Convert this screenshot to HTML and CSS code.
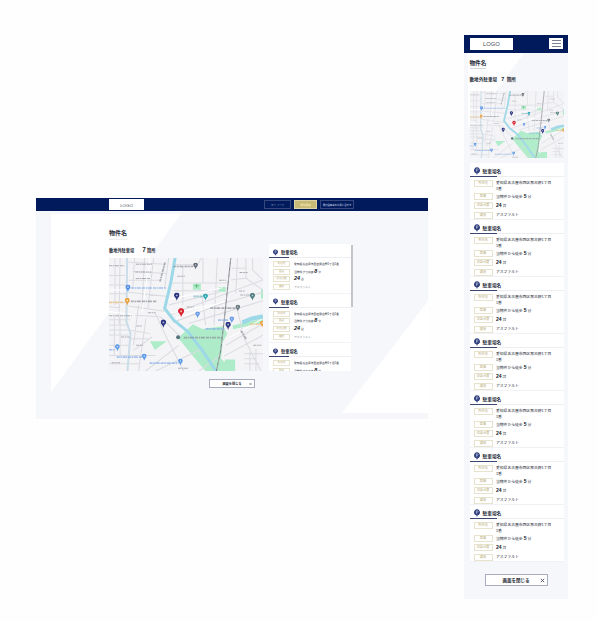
FILE: index.html
```
<!DOCTYPE html>
<html lang="ja">
<head>
<meta charset="utf-8">
<title>物件名</title>
<link rel="stylesheet" href="styles.css">
</head>
<body>
<svg class="defs" width="0" height="0">
  <symbol id="marker" viewBox="0 0 12 18"><path d="M6 18Q5 13 2 10A6 6 0 1 1 10 10Q7 13 6 18Z"/><circle cx="6" cy="6" r="2.2" fill="#fff" opacity=".6"/></symbol>
  <symbol id="pin" viewBox="0 0 12 16"><path fill="#34437f" d="M6 16 4.5 12.5A6 6 0 1 1 7.500 12.500Z"/><path d="M5 9.500V3.500h1.500a1.500 1.500 0 0 1 0 3.200H5" fill="none" stroke="#c5cae4" stroke-width="1.200"/></symbol>
  <symbol id="map" viewBox="12 9 459 338" preserveAspectRatio="xMidYMid slice">
    <rect width="490" height="360" fill="#f4f4f6"/>
    <g fill="#aeecc9">
      <path d="M218 247 262 207 290 221 350 213 365 235 351 260 346 310 385 347H300L262 302Z"/>
      <path d="M134 258H184L149 284ZM262 86H286V104H262ZM339 96H360V110H339ZM465 103H471V130H465ZM380 211 471 190V202L382 222ZM358 312H388V347H350Z"/>
    </g>
    <g fill="none" stroke="#dadbe1" stroke-width="3">
      <path d="M12 62H60M12 90H62M12 116H62M12 142H65M12 194H75M12 209H72M12 224H72M12 239H70M12 270H70M12 300H150M12 325H105M30 9V150M45 9 42 205M12 155 45 158M28 185V300M45 188V300M82 50 184 56M70 22 180 28M70 76H165M70 112 190 124M88 9 83 100M118 9 110 165M145 9 128 160M70 153 178 168M100 150 85 270M122 190 100 347M90 180 165 185 225 245M75 225 135 235M75 250H128M148 170 180 240 235 347M85 285 140 245M120 347 220 270M150 347 290 280M190 9 178 100M203 30H275L288 9M292 9V85M232 35V150M202 84H365M205 107H340M190 150 340 112M190 180 471 75M203 202 350 145 471 112M250 205 471 137M290 125 300 210M335 9 325 210M395 9 390 115M420 9V70L471 105M440 9V45L471 75M375 75 420 70M378 40H420M395 165 415 250 465 347M360 270 471 205M355 302 471 240M415 295H471M415 310H450M415 325H460M432 290V347M450 280V347M280 347 345 300"/>
    </g>
    <g fill="none" stroke="#fff" stroke-width="3"><path d="M12 105H62M12 170 80 177M185 135 350 98M210 190 360 138M365 250 471 190M135 9 110 170M190 175 340 145"/></g>
    <g fill="none" stroke="#cbdde8" stroke-width="6"><path d="M66 9 64 200 76 235 67 347"/></g>
    <g fill="none" stroke="#9dd8e8" stroke-width="9"><path d="M209 9 196 84 178 160 205 195 248 230 290 285 330 345"/><path d="M409 202 438 190 471 184" stroke-width="13"/></g>
    <path d="M375 9 357 180 345 285 332 347" fill="none" stroke="#777b83" stroke-width="3"/>
    <path d="M375 9 357 180 345 285 332 347" fill="none" stroke="#d4d7db" stroke-width="1.500" stroke-dasharray="12 7"/>
    <g fill="none" stroke-width="5" stroke-dasharray="9 2 5 2 12 3" opacity=".68">
      <path stroke="#8b8f97" stroke-width="3" d="M12 33H58M92 28H140M90 51H138M92 71H135M12 182H80M128 173H150M94 212H112M48 245H73M93 270H114M20 322H45M218 338H247M216 64H238M244 156H265M340 76H361M401 53H425M403 120H432M400 108H416M442 270H466"/>
      <path stroke="#8b8f97" d="M204 35H263M77 139H155M314 159H390M405 226 422 253M179 23 164 80M235 247H351"/>
      <path stroke="#83aceb" d="M77 99H181M35 305H112M133 323H219M12 283H28M300 221H356M337 195H369"/>
      <path stroke="#70bac1" d="M264 124H291"/><path stroke="#efbd78" d="M12 142H55M432 207H461"/>
    </g>
    <g>
      <use href="#marker" x="61" y="89" width="15" height="22" fill="#5390e7"/>
      <use href="#marker" x="59" y="129" width="15" height="22" fill="#eaa13d"/>
      <use href="#marker" x="263" y="24" width="14" height="20" fill="#606a75"/>
      <use href="#marker" x="292" y="116" width="15" height="21" fill="#2aa6b1"/>
      <use href="#marker" x="206" y="113" width="16" height="24" fill="#29337f"/>
      <use href="#marker" x="166" y="193" width="16" height="25" fill="#29337f"/>
      <use href="#marker" x="359" y="200" width="16" height="24" fill="#29337f"/>
      <use href="#marker" x="218" y="159" width="18" height="28" fill="#d9232c"/>
      <use href="#marker" x="269" y="169" width="14" height="20" fill="#669ae8"/>
      <use href="#marker" x="371" y="184" width="14" height="20" fill="#669ae8"/>
      <use href="#marker" x="432" y="114" width="15" height="22" fill="#4d7b7c"/>
      <use href="#marker" x="389" y="149" width="14" height="20" fill="#68767d"/>
      <use href="#marker" x="30" y="267" width="14" height="21" fill="#5a98e8"/>
      <use href="#marker" x="110" y="295" width="14" height="21" fill="#5a98e8"/>
      <use href="#marker" x="218" y="310" width="14" height="20" fill="#5a98e8"/>
      <use href="#marker" x="461" y="197" width="15" height="20" fill="#eaa13d"/>
      <circle cx="218" cy="246" r="6" fill="#58727a"/><path d="M266 92H280M273 87V99" stroke="#6dbb86" stroke-width="3"/>
    </g>
  </symbol>
</svg>
<main class="showcase">
  <section class="screen wide">
    <header class="bar"><div class="logo">LOGO</div><nav><a>マイページ</a><a class="gold">物件検索</a><a class="tel">周辺駐車場のお問い合わせ</a></nav></header>
    <div class="content">
      <svg class="backdrop" viewBox="0 0 392 208" preserveAspectRatio="none"><path fill="#fff" d="M15 3H145L15 181ZM392 90V202H306Z"/></svg>
      <h1><span>物件名</span></h1>
      <p class="count">敷地外駐車場 <b>7</b> 箇所</p>
      <div class="columns">
        <svg class="map"><use href="#map"/></svg>
        <div class="list">
          <article><h2><svg><use href="#pin"/></svg>駐車場名</h2><dl><dt>所在地</dt><dd>愛知県名古屋市西区那古野1丁目1番</dd><dt>距離</dt><dd>当物件から徒歩 <b>8</b> 分</dd><dt>収容台数</dt><dd><b>24</b> 台</dd><dt>舗装</dt><dd class="soft">アスファルト</dd></dl></article>
          <article><h2><svg><use href="#pin"/></svg>駐車場名</h2><dl><dt>所在地</dt><dd>愛知県名古屋市西区那古野1丁目1番</dd><dt>距離</dt><dd>当物件から徒歩 <b>8</b> 分</dd><dt>収容台数</dt><dd><b>24</b> 台</dd><dt>舗装</dt><dd class="soft">アスファルト</dd></dl></article>
          <article><h2><svg><use href="#pin"/></svg>駐車場名</h2><dl><dt>所在地</dt><dd>愛知県名古屋市西区那古野1丁目1番</dd><dt>距離</dt><dd>当物件から徒歩 <b>8</b> 分</dd></dl></article>
        </div>
        <div class="scroll"></div>
      </div>
      <a class="close">画面を閉じる<svg viewBox="0 0 6 6"><path d="M1 1 5 5M5 1 1 5"/></svg></a>
    </div>
  </section>
  <section class="screen phone">
    <header class="bar"><div class="logo">LOGO</div><div class="menu"><i></i><i></i><i></i></div></header>
    <div class="content">
      <svg class="backdrop" viewBox="0 0 104 546" preserveAspectRatio="none"><path fill="#fff" d="M4 0H60L4 76Z"/></svg>
      <h1><span>物件名</span></h1>
      <p class="count">敷地外駐車場 <b>7</b> 箇所</p>
      <svg class="map"><use href="#map"/></svg>
      <div class="list">
        <article><h2><svg><use href="#pin"/></svg>駐車場名</h2><dl><dt>所在地</dt><dd>愛知県名古屋市西区那古野1丁目<br>1番</dd><dt>距離</dt><dd>当物件から徒歩 <b>5</b> 分</dd><dt>収容台数</dt><dd><b>24</b> 台</dd><dt>舗装</dt><dd>アスファルト</dd></dl></article>
        <article><h2><svg><use href="#pin"/></svg>駐車場名</h2><dl><dt>所在地</dt><dd>愛知県名古屋市西区那古野1丁目<br>1番</dd><dt>距離</dt><dd>当物件から徒歩 <b>5</b> 分</dd><dt>収容台数</dt><dd><b>24</b> 台</dd><dt>舗装</dt><dd>アスファルト</dd></dl></article>
        <article><h2><svg><use href="#pin"/></svg>駐車場名</h2><dl><dt>所在地</dt><dd>愛知県名古屋市西区那古野1丁目<br>1番</dd><dt>距離</dt><dd>当物件から徒歩 <b>5</b> 分</dd><dt>収容台数</dt><dd><b>24</b> 台</dd><dt>舗装</dt><dd>アスファルト</dd></dl></article>
        <article><h2><svg><use href="#pin"/></svg>駐車場名</h2><dl><dt>所在地</dt><dd>愛知県名古屋市西区那古野1丁目<br>1番</dd><dt>距離</dt><dd>当物件から徒歩 <b>5</b> 分</dd><dt>収容台数</dt><dd><b>24</b> 台</dd><dt>舗装</dt><dd>アスファルト</dd></dl></article>
        <article><h2><svg><use href="#pin"/></svg>駐車場名</h2><dl><dt>所在地</dt><dd>愛知県名古屋市西区那古野1丁目<br>1番</dd><dt>距離</dt><dd>当物件から徒歩 <b>5</b> 分</dd><dt>収容台数</dt><dd><b>24</b> 台</dd><dt>舗装</dt><dd>アスファルト</dd></dl></article>
        <article><h2><svg><use href="#pin"/></svg>駐車場名</h2><dl><dt>所在地</dt><dd>愛知県名古屋市西区那古野1丁目<br>1番</dd><dt>距離</dt><dd>当物件から徒歩 <b>5</b> 分</dd><dt>収容台数</dt><dd><b>24</b> 台</dd><dt>舗装</dt><dd>アスファルト</dd></dl></article>
        <article><h2><svg><use href="#pin"/></svg>駐車場名</h2><dl><dt>所在地</dt><dd>愛知県名古屋市西区那古野1丁目<br>1番</dd><dt>距離</dt><dd>当物件から徒歩 <b>5</b> 分</dd><dt>収容台数</dt><dd><b>24</b> 台</dd><dt>舗装</dt><dd>アスファルト</dd></dl></article>
      </div>
      <a class="close">画面を閉じる<svg viewBox="0 0 6 6"><path d="M1 1 5 5M5 1 1 5"/></svg></a>
    </div>
  </section>
</main>
</body>
</html>
```
FILE: styles.css
```
* { box-sizing: border-box; }
body { margin: 0; background: #fefefe; color: #252a37; font-family: "Liberation Sans", "Noto Sans CJK JP", sans-serif; }
.defs { position: absolute; }
h1, h2, p, dl, dd { margin: 0; }
.showcase { display: flex; align-items: flex-start; height: 622px; padding: 35px 30px 0 36px; justify-content: space-between; overflow: hidden; }
.screen { flex: none; background: #f6f7fb; }
.bar { display: flex; background: #001a5c; }
.logo { display: flex; align-items: center; justify-content: center; background: #fff; color: #4b4f59; }
.content { position: relative; isolation: isolate; }
.backdrop { position: absolute; inset: 0; width: 100%; height: 100%; z-index: -1; }
h1 span { display: inline-block; border-bottom: 1px solid #d5d7df; }
.map { display: block; flex: none; }
article { background: #fff; }
h2 { display: flex; align-items: center; }
h2 svg { flex: none; }
dl { display: grid; }
dt { display: flex; align-items: center; justify-content: center; border: 1px solid #e8e3cf; color: #beb385; white-space: nowrap; }
dd { white-space: nowrap; }
dd b { color: #111827; }
.close { display: flex; align-items: center; justify-content: center; position: relative; background: #fff; border: 1px solid #a7adbf; font-weight: 700; white-space: nowrap; }
.close svg { position: absolute; width: 4px; height: 4px; stroke: #3c4358; fill: none; }

.wide { width: 392px; height: 221px; margin-top: 163px; }
.wide .bar { height: 13px; padding: 1px 74px 1px 73px; justify-content: space-between; }
.wide .logo { width: 35px; height: 11px; padding-top: 1px; font-size: 4.4px; }
.wide nav { display: flex; gap: 3px; padding-top: 1px; }
.wide nav a { display: flex; align-items: center; justify-content: center; width: 27px; height: 9px; border: 1px solid #35487d; color: #9ba6c7; font-size: 2.7px; white-space: nowrap; }
.wide nav .gold { width: 23px; background: #c8b977; border-color: #ddd3a6; color: #fff3bd; }
.wide nav .tel { width: 34px; color: #d9dfef; font-size: 2.4px; }
.wide .content { height: 208px; padding: 15px 74px 0 73px; }
.wide h1 { height: 18px; font-size: 6px; line-height: 14px; }
.wide h1 span { height: 14px; border-color: #eff0f3; }
.wide .count { height: 14px; font-size: 4.2px; line-height: 12px; font-weight: 700; white-space: pre; }
.wide .count b { font-size: 6.5px; margin-left: 7px; }
.wide .columns { display: flex; align-items: flex-end; height: 113px; }
.wide .map { width: 154px; height: 113px; }
.wide .list { width: 82px; height: 127px; margin-left: 6px; overflow: hidden; background: #fff; flex: none; }
.wide .scroll { align-self: flex-start; width: 2px; height: 62px; margin-top: -13px; background: #c3c5ca; }
.wide article { height: 49.5px; border-bottom: 1px solid #f2f3f6; }
.wide h2 { height: 14px; padding: 2px 0 0 4px; gap: 3px; font-size: 4.2px; background: linear-gradient(#3d4870, #3d4870) 0 100% / 20px 1px no-repeat, linear-gradient(#eceef2, #eceef2) 0 100% / 100% 1px no-repeat; }
.wide h2 svg { width: 5px; height: 7px; }
.wide dl { grid-template-columns: 17px 1fr; grid-auto-rows: 6px; gap: 1.7px 4px; padding: 3px 4px 0; font-size: 2.8px; line-height: 6px; }
.wide dt { font-size: 2.6px; }
.wide dd b { font-size: 5.5px; line-height: 5px; font-style: italic; }
.wide .soft { color: #8c9099; }
.wide .close { width: 46px; height: 9px; margin: 8px 0 0 100px; font-size: 3.2px; }
.wide .close svg { width: 3px; right: 2px; }

.phone { width: 104px; height: 564px; }
.phone .bar { height: 18px; padding: 3px 5px 0 6px; justify-content: space-between; }
.phone .logo { width: 43px; height: 12px; font-size: 5.8px; }
.menu { display: flex; flex-direction: column; align-items: center; justify-content: center; gap: 2px; width: 14px; height: 11px; background: #fff; }
.menu i { width: 9px; height: 1px; background: #7d8293; }
.phone .content { height: 546px; padding: 4px 4.5px 0 5.5px; }
.phone h1 { height: 16px; font-size: 5.6px; line-height: 12px; }
.phone h1 span { height: 12px; }
.phone .count { height: 18px; font-size: 4.6px; line-height: 12px; font-weight: 700; white-space: pre; }
.phone .count b { font-size: 5.5px; margin: 0 1px 0 3px; }
.phone .map { width: 94px; height: 67px; opacity: .95; }
.phone .list { margin-top: 5px; }
.phone article { height: 57px; border-bottom: 1px solid #f0f2f6; }
.phone h2 { height: 14px; padding: 1px 0 0 4px; gap: 3px; font-size: 4.7px; background: linear-gradient(#3d4870, #3d4870) 0 100% / 27px 1px no-repeat, linear-gradient(#eceef2, #eceef2) 0 100% / 100% 1px no-repeat; }
.phone h2 svg { width: 6px; height: 8px; }
.phone dl { grid-template-columns: 19px 1fr; grid-template-rows: 11px 7px 7px 7px; gap: 2.2px 3.500px; padding: 3px 3px 0 4px; font-size: 3.8px; line-height: 7px; }
.phone dt { height: 7px; font-size: 3.2px; }
.phone dd:first-of-type { line-height: 6px; }
.phone dd b { font-size: 5px; }
.phone .close { width: 63px; height: 12px; margin: 12px 0 0 15px; font-size: 4.5px; }
.phone .close svg { right: 2px; width: 5px; height: 5px; }
```
